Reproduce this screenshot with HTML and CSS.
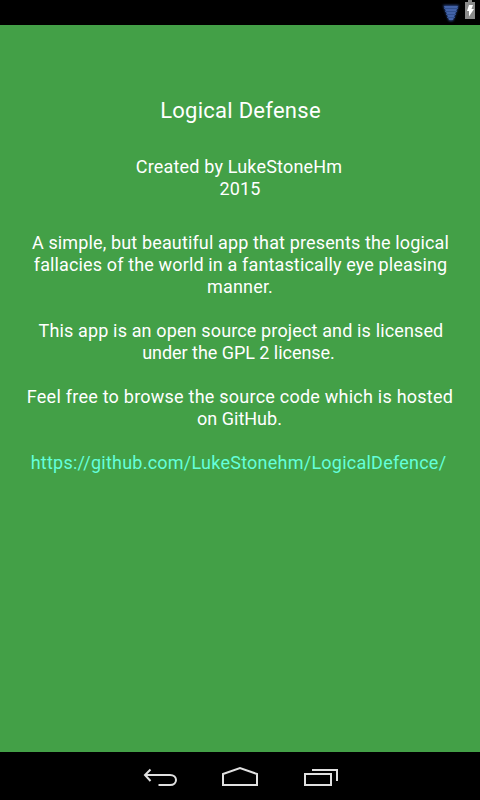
FILE: index.html
```html
<!DOCTYPE html>
<html lang="en">
<head>
<meta charset="utf-8">
<title>Logical Defense</title>
<link rel="stylesheet" href="styles.css">
</head>
<body>
<header class="status">
<svg class="wifi" width="20" height="22" viewBox="0 0 20 22"><path class="glow" d="M2 2h16L12 18H8z" fill="#2c4a8c"/><path d="M3 3h14L12 17H8z" fill="#4363a8"/><path d="M3 5.500h14M4 8.500h12M5 11.500h10M6 14.500h8" stroke="#31508f"/></svg>
<svg class="battery" width="10" height="19" viewBox="0 0 10 19"><path d="M3 0h4v2h3v17H0V2h3z" fill="#8b8b8b"/><path d="M4 5h4L6.500 9H9l-5 7.500V11H2z" fill="#fff"/></svg>
</header>
<main class="about">
<h1 class="title">Logical Defense</h1>
<p class="credit"><span class="wide author">Created by LukeStoneHm</span><span class="wide">2015</span></p>
<p><span class="normal">A simple, but beautiful app that presents the logical</span><span class="normal">fallacies of the world in a fantastically eye pleasing</span><span class="wide">manner.</span></p>
<p><span class="normal offset">This app is an open source project and is licensed</span><span class="tight">under the GPL 2 license.</span></p>
<p><span class="wider">Feel free to browse the source code which is hosted</span><span class="host">on GitHub.</span></p>
<p><a class="link">https://github.com/LukeStonehm/LogicalDefence/</a></p>
</main>
<nav class="nav">
<svg width="240" height="48" viewBox="0 0 240 48" fill="none" stroke="#e0e0e0" stroke-width="2"><path d="M30.500 17.500l-5.500 5.500 5.500 6M25 23h25c8 0 8 10 0 10H38.500M103 33V22l17-6 17 6v11zM185 22h26v11h-26zM192 18h25v11"/></svg>
</nav>
</body>
</html>
```

FILE: styles.css
```css
body { margin: 0; height: 800px; display: flex; flex-direction: column; background: #43a047; color: #fff; font-family: Roboto, sans-serif; }
.status { height: 25px; background: #000; display: flex; justify-content: flex-end; gap: 4px; padding-right: 5px; }
.wifi { margin-top: 3px; }
.glow { filter: blur(1px); }
.about { flex: 1; text-align: center; }
.title { margin: 72px 0 0; padding-left: 1px; font-size: 22px; line-height: 27px; font-weight: 400; letter-spacing: 0.26px; }
.about p { margin: 0 0 22px; font-size: 18px; line-height: 22px; }
.about .credit { margin: 32px 0; }
.about span { display: block; white-space: nowrap; }
.normal { padding-left: 1px; letter-spacing: 0.14px; }
.offset { padding-left: 2px; }
.wide { letter-spacing: 0.18px; }
.author { padding-right: 2px; }
.wider { letter-spacing: 0.235px; }
.tight { padding-right: 3px; letter-spacing: -0.04px; }
.host { padding-right: 1px; }
.link { padding-right: 3px; color: #64ffda; letter-spacing: 0.24px; }
.nav { height: 48px; background: #000; display: flex; justify-content: center; }
```
